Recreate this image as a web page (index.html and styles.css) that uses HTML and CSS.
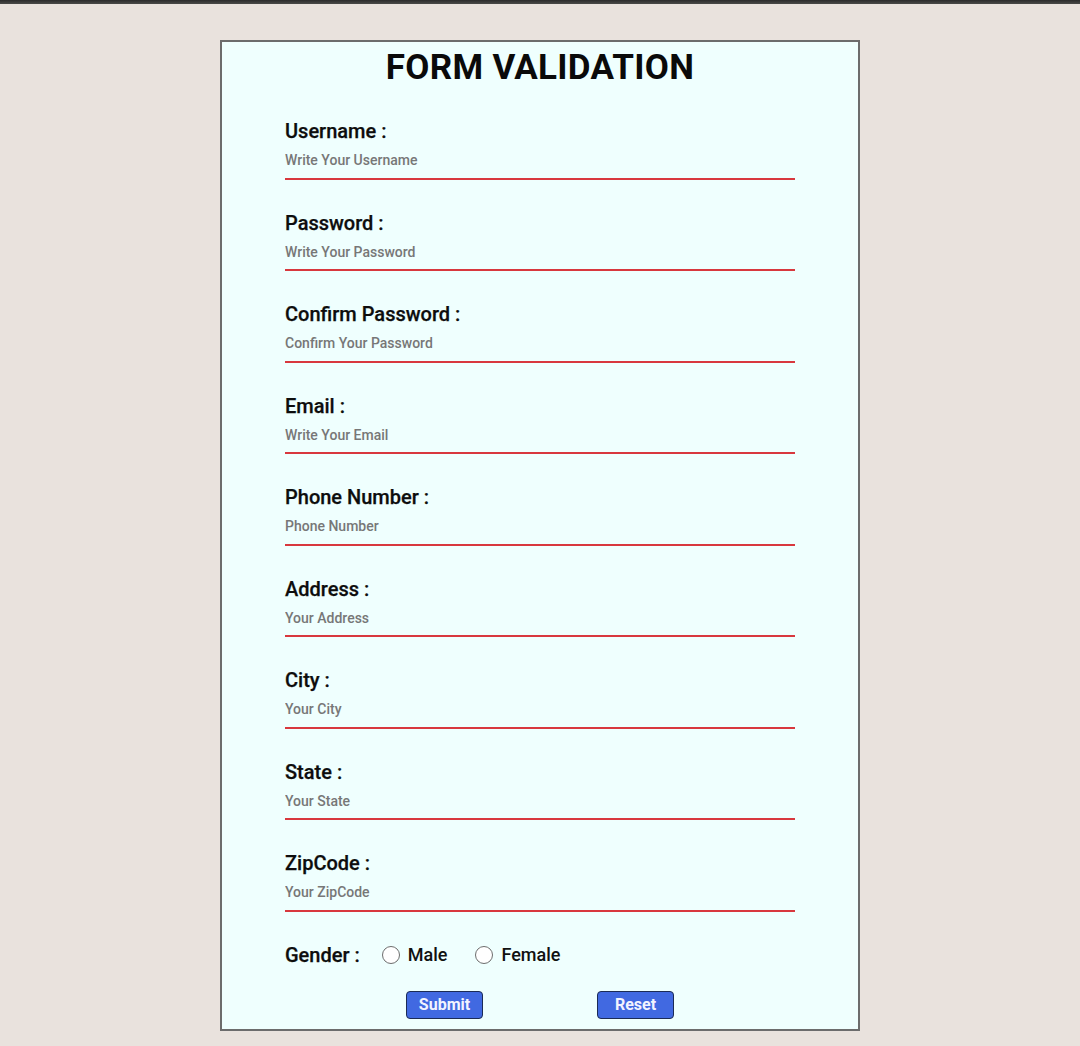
FILE: index.html
```html
<!DOCTYPE html>
<html>
<head>
<meta charset="utf-8">
<link rel="stylesheet" href="styles.css">
</head>
<body>
<div class="topbar"></div>
<main class="page">
  <form class="card">
    <h1 class="title">FORM VALIDATION</h1>
    <div class="fields">
      <div class="field"><label class="label">Username :</label><input class="input" type="text" placeholder="Write Your Username"></div>
      <div class="field"><label class="label">Password :</label><input class="input" type="password" placeholder="Write Your Password"></div>
      <div class="field"><label class="label">Confirm Password :</label><input class="input" type="password" placeholder="Confirm Your Password"></div>
      <div class="field"><label class="label">Email :</label><input class="input" type="text" placeholder="Write Your Email"></div>
      <div class="field"><label class="label">Phone Number :</label><input class="input" type="text" placeholder="Phone Number"></div>
      <div class="field"><label class="label">Address :</label><input class="input" type="text" placeholder="Your Address"></div>
      <div class="field"><label class="label">City :</label><input class="input" type="text" placeholder="Your City"></div>
      <div class="field"><label class="label">State :</label><input class="input" type="text" placeholder="Your State"></div>
      <div class="field"><label class="label">ZipCode :</label><input class="input" type="text" placeholder="Your ZipCode"></div>
      <div class="gender">
        <span class="label">Gender :</span>
        <label class="opt"><span class="radio"></span>Male</label>
        <label class="opt"><span class="radio"></span>Female</label>
      </div>
    </div>
    <div class="buttons">
      <button type="button" class="btn">Submit</button>
      <button type="button" class="btn">Reset</button>
    </div>
  </form>
</main>
</body>
</html>
```
FILE: styles.css
```css
html, body {
  margin: 0;
  padding: 0;
}
body {
  background: #e9e2dd;
  font-family: Roboto, "Liberation Sans", sans-serif;
  height: 1046px;
  overflow: hidden;
}
.topbar {
  height: 4px;
  background: linear-gradient(#2b2b2b, #4a4a48);
}
.page {
  display: flex;
  justify-content: center;
  padding-top: 36px;
}
.card {
  box-sizing: border-box;
  width: 640px;
  height: 991px;
  border: 2px solid #6c6c6c;
  background: #effffe;
  display: flex;
  flex-direction: column;
}
.title {
  margin: 0;
  padding-top: 6px;
  text-align: center;
  font-size: 35px;
  line-height: 40px;
  font-weight: 700;
  color: #0a0a0a;
  letter-spacing: 0.3px;
}
.fields {
  padding: 31px 0 0 63px;
  display: flex;
  flex-direction: column;
}
.field {
  display: flex;
  flex-direction: column;
  margin-bottom: 31px;
}
.label {
  font-size: 20px;
  line-height: 24px;
  font-weight: 500;
  color: #0d0d0d;
  -webkit-text-stroke: 0.25px #0d0d0d;
}
.input {
  box-sizing: border-box;
  flex: none;
  width: 510px;
  height: 34.5px;
  margin-top: 2px;
  padding: 0 0 2px 0;
  border: none;
  border-bottom: 2.5px solid #d8383e;
  background: transparent;
  font-family: Roboto, "Liberation Sans", sans-serif;
  font-size: 14px;
  font-weight: 500;
  outline: none;
}
.input::placeholder {
  color: #777;
}
.gender {
  display: flex;
  align-items: center;
  height: 24px;
}
.gender .label {
  margin-right: 22px;
}
.opt {
  display: flex;
  align-items: center;
  font-size: 18px;
  font-weight: 500;
  color: #111;
  margin-right: 28px;
}
.radio {
  box-sizing: border-box;
  width: 18px;
  height: 18px;
  border: 1.5px solid #6d6d6d;
  border-radius: 50%;
  background: #fff;
  margin-right: 8px;
}
.buttons {
  display: flex;
  justify-content: center;
  gap: 114px;
  margin-top: 24px;
}
.btn {
  box-sizing: border-box;
  width: 77px;
  height: 28px;
  background: #4169e1;
  border: 1px solid #1c2b55;
  border-radius: 4px;
  color: #f2f4ff;
  font-family: Roboto, "Liberation Sans", sans-serif;
  font-size: 16px;
  font-weight: 700;
  padding: 0;
}
```
